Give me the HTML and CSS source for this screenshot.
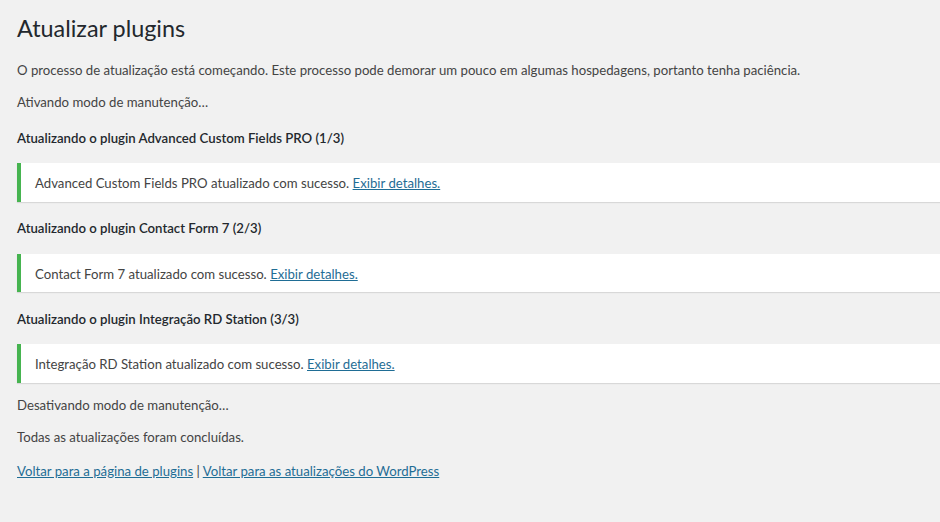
FILE: index.html
```html
<!DOCTYPE html>
<html lang="pt-BR">
<head>
<meta charset="utf-8">
<title>Atualizar plugins</title>
<link rel="stylesheet" href="styles.css">
</head>
<body>
<div class="wrap">
  <h1 class="page-title">Atualizar plugins</h1>
  <p class="msg">O processo de atualização está começando. Este processo pode demorar um pouco em algumas hospedagens, portanto tenha paciência.</p>
  <p class="msg">Ativando modo de manutenção…</p>

  <h2 class="step">Atualizando o plugin Advanced Custom Fields PRO (1/3)</h2>
  <div class="notice">
    <p class="notice-text">Advanced Custom Fields PRO atualizado com sucesso. <a href="#" class="link">Exibir detalhes.</a></p>
  </div>

  <h2 class="step">Atualizando o plugin Contact Form 7 (2/3)</h2>
  <div class="notice">
    <p class="notice-text">Contact Form 7 atualizado com sucesso. <a href="#" class="link">Exibir detalhes.</a></p>
  </div>

  <h2 class="step">Atualizando o plugin Integração RD Station (3/3)</h2>
  <div class="notice">
    <p class="notice-text">Integração RD Station atualizado com sucesso. <a href="#" class="link">Exibir detalhes.</a></p>
  </div>

  <p class="msg">Desativando modo de manutenção…</p>
  <p class="msg">Todas as atualizações foram concluídas.</p>
  <p class="msg last"><a href="#" class="link">Voltar para a página de plugins</a> | <a href="#" class="link">Voltar para as atualizações do WordPress</a></p>
</div>
</body>
</html>
```
FILE: styles.css
```css
html, body {
  margin: 0;
  padding: 0;
  background: #f1f1f1;
  overflow: hidden;
}
body {
  font-family: Lato, "Noto Sans", sans-serif;
  font-size: 13.2px;
  line-height: 19.5px;
  color: #444;
}
.wrap {
  padding: 13px 0 0 17px;
}
.page-title {
  margin: 0 0 17.6px;
  font-size: 23.4px;
  font-weight: 400;
  line-height: 30px;
  color: #23282d;
}
.msg {
  margin: 12.5px 17px 12.5px 0;
}
.msg.last {
  margin-top: 14px;
}
.step {
  margin: 16.5px 0 0;
  font-size: 13.2px;
  font-weight: 600;
  line-height: 19.5px;
  color: #23282d;
}
.step + .notice {
  margin-top: 15px;
}
.notice + .step {
  margin-top: 17.6px;
}
.notice {
  margin: 15px 0 13.6px;
  background: #fff;
  border-left: 4px solid #46b450;
  box-shadow: 0 1px 1px 0 rgba(0, 0, 0, 0.1);
  padding: 11px 14px 8px;
}
.notice-text {
  margin: 0;
}
.link {
  color: #1f6d95;
  text-decoration: underline;
}
```
